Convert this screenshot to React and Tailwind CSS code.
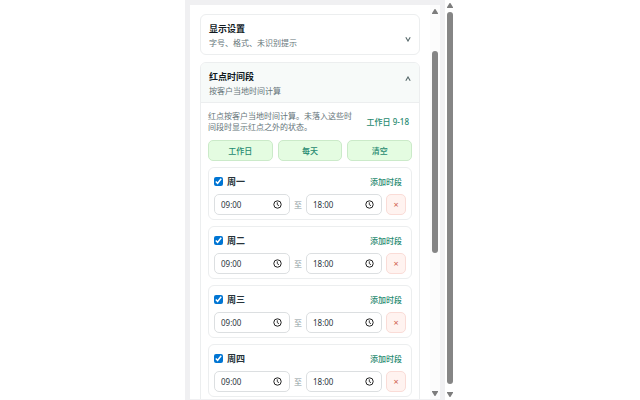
import { useState } from "react";

const DAYS = ["周一", "周二", "周三", "周四"];
const PRESETS = ["工作日", "每天", "清空"];

const Clock = () => (
  <svg className="h-[9px] w-[9px] shrink-0 text-[#222]" viewBox="0 0 18 18" fill="none" stroke="currentColor" aria-hidden="true">
    <circle cx="9" cy="9" r="7.4" strokeWidth="2" />
    <path d="M8.6 4.6v4.8l3.4 2" strokeWidth="1.8" />
  </svg>
);

const Chevron = ({ open }) => (
  <svg className={open ? "h-[14px] w-[6px] rotate-180" : "h-[14px] w-[6px]"} viewBox="0 0 6 14" fill="none" stroke="#56686a" aria-hidden="true">
    <path d="M0.8 9.2 L3 13 L5.2 9.2" strokeWidth="1.1" />
  </svg>
);

const Arrow = ({ down }) => (
  <svg className={down ? "h-[5px] w-[6px] rotate-180" : "h-[5px] w-[6px]"} viewBox="0 0 6 5" aria-hidden="true">
    <path d="M2.6 0h.8L6 4.2V5H0v-.8z" fill="#7d7d7d" />
  </svg>
);

const TimeField = ({ label, value }) => {
  const [time, setTime] = useState(value);
  return (
    <div className="flex h-[21px] min-w-0 items-center rounded-[5px] border border-[#dcdfe1] bg-white pl-[6px] pr-[7px]">
      <input
        aria-label={label}
        className="min-w-0 flex-1 bg-transparent text-[#2b3640] outline-none"
        value={time}
        onChange={(e) => setTime(e.target.value)}
      />
      <Clock />
    </div>
  );
};

const SectionHeader = ({ title, hint, open }) => (
  <button type="button" aria-expanded={open} className={`flex w-full items-center justify-between px-[8px] text-left ${open ? "border-b border-[#eceeef] bg-[#f7faf9]" : ""}`}>
    <span className="flex flex-col pt-[7px] pb-[4px]">
      <span className="text-[9px] leading-[14px] font-bold text-[#111a1f]">{title}</span>
      <span className="leading-[14px] text-[#66757a]">{hint}</span>
    </span>
    <Chevron open={open} />
  </button>
);

const DayCard = ({ day }) => {
  const [checked, setChecked] = useState(true);
  return (
    <div className="flex flex-col gap-[5px] rounded-[6px] border border-[#eceeef] px-[5px] pt-[5px] pb-[4px]">
      <div className="flex h-[16px] items-center justify-between pr-[4px]">
        <label className="flex items-center gap-[4px] text-[9px] font-bold text-[#26333a]">
          <input type="checkbox" className="h-[9px] w-[9px] accent-[#0075d3]" checked={checked} onChange={() => setChecked(!checked)} />
          {day}
        </label>
        <button type="button" className="font-medium text-[#1f8a70]">添加时段</button>
      </div>
      <div className="grid grid-cols-[1fr_8px_1fr_20px] items-center gap-[4px]">
        <TimeField label={`${day} 开始`} value="09:00" />
        <span className="text-[#8b999c]">至</span>
        <TimeField label={`${day} 结束`} value="18:00" />
        <button type="button" aria-label="删除时段" className="h-[21px] rounded-[5px] border border-[#fadcd7] bg-[#fff3f0] text-[9px] text-[#cf5f50]">×</button>
      </div>
    </div>
  );
};

export default function App() {
  return (
    <div className="flex h-screen justify-center overflow-hidden bg-white font-['Noto_Sans','Noto_Sans_CJK_SC',sans-serif] text-[8px] leading-[11px]">
      <div className="flex w-full max-w-[270px]">
        <main className="flex min-w-0 flex-1 bg-[#f0f0f2] px-[5px] pt-[5px] pb-px">
          <div className="flex min-w-0 flex-1 bg-white">
            {/* settings list */}
            <div className="flex min-w-0 flex-1 flex-col gap-[7px] overflow-hidden px-[10px] pt-[9px]">
              <section className="shrink-0 rounded-[6px] border border-[#eceeef]">
                <SectionHeader title="显示设置" hint="字号、格式、未识别提示" open={false} />
              </section>

              <section className="shrink-0 overflow-hidden rounded-[6px] border border-[#eceeef]">
                <SectionHeader title="红点时间段" hint="按客户当地时间计算" open />
                <div className="flex flex-col gap-[6px] px-[7px] pt-[7px] pb-[20px]">
                  <div className="flex items-center justify-between gap-[8px] pr-[3px] pb-[2px]">
                    <p className="w-[146px] text-[#66757a]">红点按客户当地时间计算。未落入这些时间段时显示红点之外的状态。</p>
                    <span className="font-medium whitespace-nowrap text-[#1f8a70]">工作日 9-18</span>
                  </div>
                  <div className="grid grid-cols-3 gap-[5px]">
                    {PRESETS.map((name) => (
                      <button key={name} type="button" className="h-[21px] rounded-[5px] border border-[#cbeac9] bg-[#e4fce1] font-medium text-[#1f8a70]">{name}</button>
                    ))}
                  </div>
                  {DAYS.map((day) => <DayCard key={day} day={day} />)}
                </div>
              </section>
            </div>

            {/* panel scrollbar */}
            <div className="flex w-[10px] flex-col items-center bg-[#fcfcfc] pt-[4px] pb-[3px]">
              <Arrow />
              <div className="flex-[37]" />
              <div className="w-[6px] flex-[202] rounded-full bg-[#858585]" />
              <div className="flex-[138]" />
              <Arrow down />
            </div>
          </div>
        </main>

        {/* page scrollbar */}
        <div className="flex w-[10px] flex-col items-center bg-white py-[3px]">
          <Arrow />
          <div className="flex-[4]" />
          <div className="w-[6px] flex-[372] rounded-full bg-[#858585]" />
          <div className="flex-[8]" />
          <Arrow down />
        </div>
      </div>
    </div>
  );
}
